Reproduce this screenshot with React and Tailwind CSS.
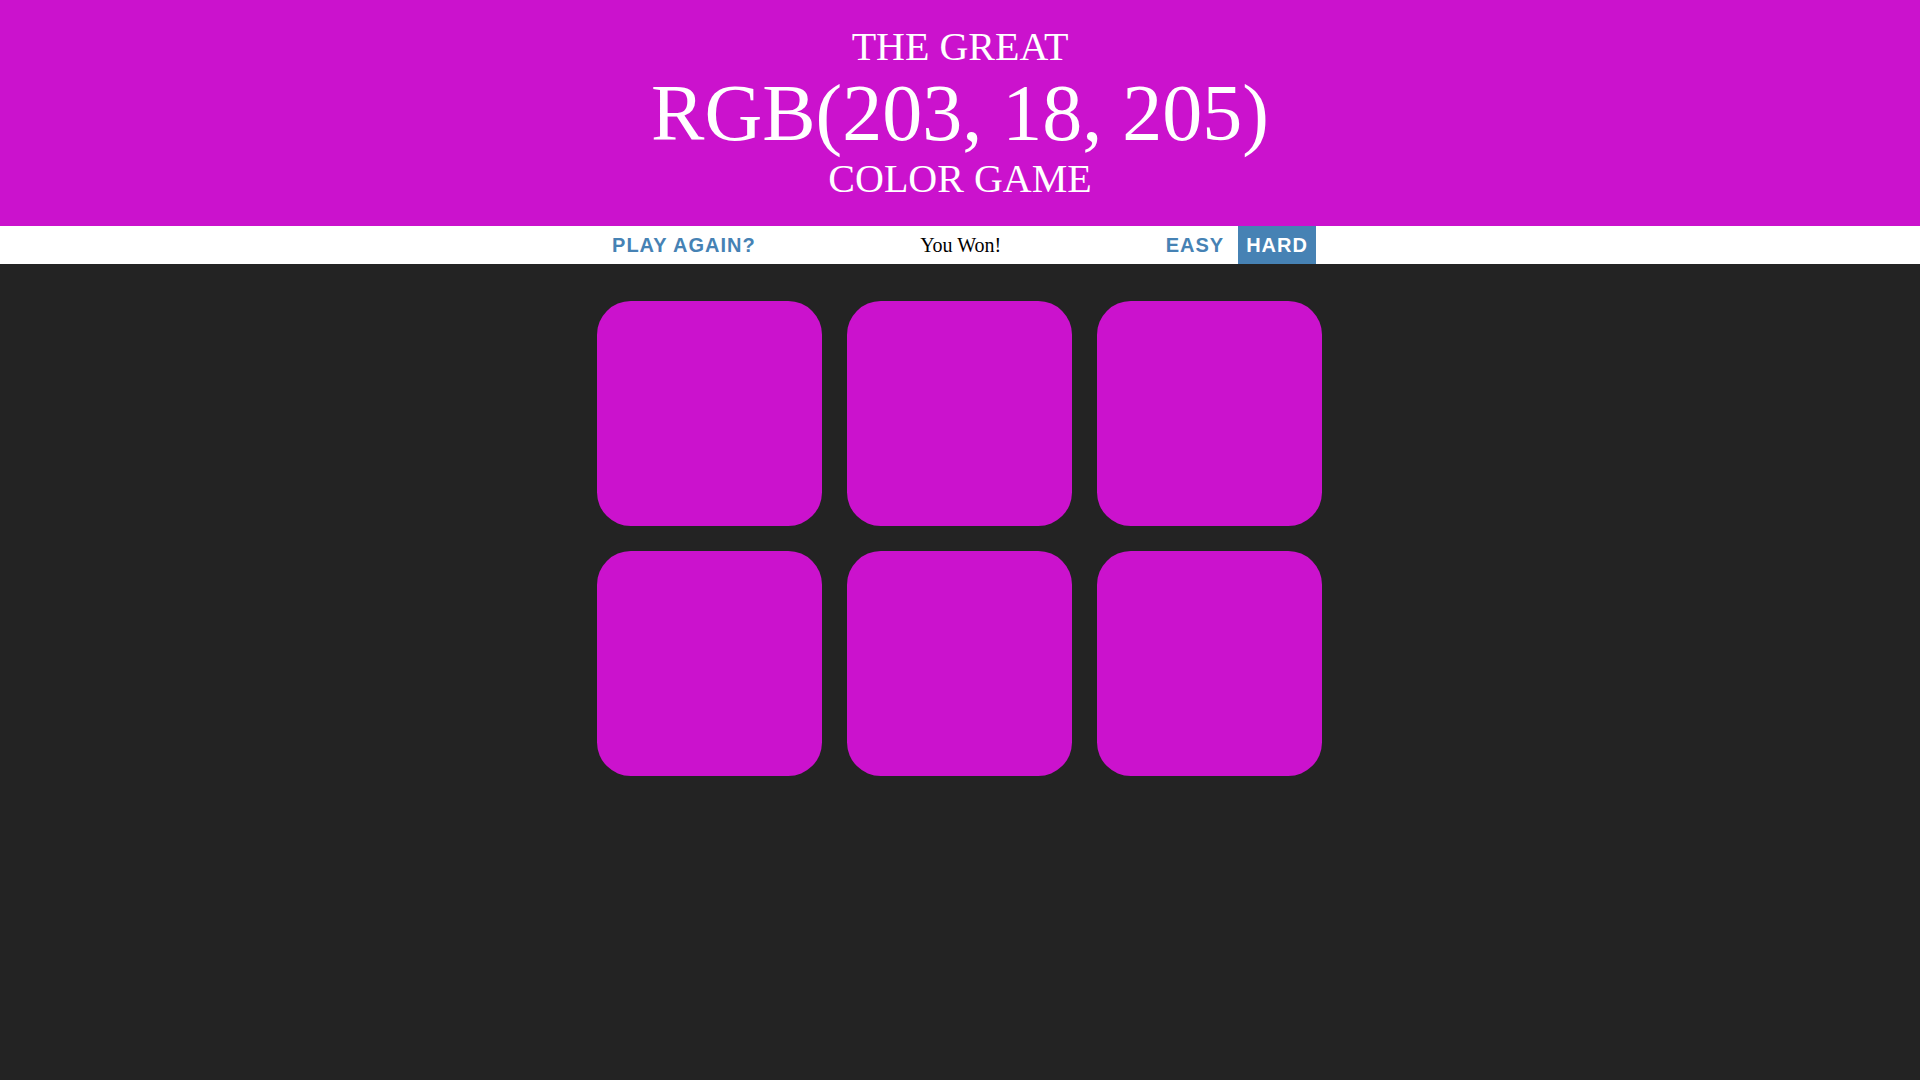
export default function App() {
  const squares = [0, 1, 2, 3, 4, 5];
  return (
    <div className="min-h-screen w-full bg-[#232323]">
      <h1
        className="m-0 bg-[#cb12cd] py-[25px] text-center font-normal uppercase text-white"
        style={{ fontFamily: '"Liberation Serif", "Times New Roman", serif' }}
      >
        <div className="text-[40px] leading-[44px]">The Great</div>
        <div className="text-[80px] leading-[88px]">RGB(203, 18, 205)</div>
        <div className="text-[40px] leading-[44px]">Color Game</div>
      </h1>
      <div className="flex h-[38px] items-stretch justify-center gap-[5px] bg-white">
        <button
          className="h-full bg-white px-2 text-[20px] font-bold uppercase tracking-[1px] text-[#4682b4]"
          style={{ fontFamily: '"Liberation Sans", Arial, sans-serif' }}
        >
          Play Again?
        </button>
        <span
          className="flex w-[384px] items-center justify-center text-[20px] text-black"
          style={{ fontFamily: '"Liberation Serif", "Times New Roman", serif' }}
        >
          You Won!
        </span>
        <button
          className="h-full bg-white px-2 text-[20px] font-bold uppercase tracking-[1px] text-[#4682b4]"
          style={{ fontFamily: '"Liberation Sans", Arial, sans-serif' }}
        >
          Easy
        </button>
        <button
          className="ml-[1px] h-full bg-[#4682b4] px-2 text-[20px] font-bold uppercase tracking-[1px] text-white"
          style={{ fontFamily: '"Liberation Sans", Arial, sans-serif' }}
        >
          Hard
        </button>
      </div>
      <div className="mx-auto mt-[24.5px] flex w-[750px] flex-wrap">
        {squares.map((i) => (
          <div
            key={i}
            className="m-[1.66%] aspect-square w-[30%] rounded-[15%] bg-[#cb12cd]"
          />
        ))}
      </div>
    </div>
  );
}
